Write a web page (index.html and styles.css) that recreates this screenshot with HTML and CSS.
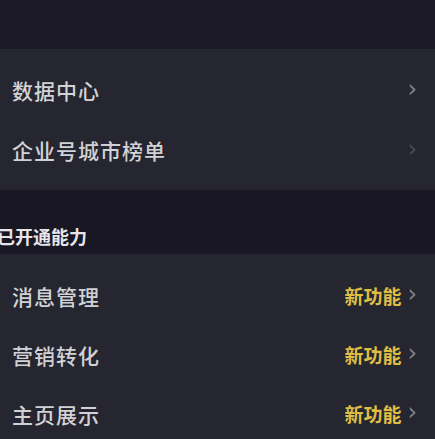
FILE: index.html
```html
<!DOCTYPE html>
<html lang="zh-CN">
<head>
    <meta charset="UTF-8">
    <meta name="viewport" content="width=device-width, initial-scale=1.0">
    <title>企业服务</title>
    <link rel="stylesheet" href="styles.css">
</head>
<body>

<div class="top-bar"></div>

<div class="card card-tools">
    <div class="row">
        <span class="label">数据中心</span>
        <span class="arrow">&#8250;</span>
    </div>
    <div class="row">
        <span class="label">企业号城市榜单</span>
        <span class="arrow dim">&#8250;</span>
    </div>
</div>

<div class="section-title">已开通能力</div>

<div class="card card-abilities">
    <div class="row">
        <span class="label">消息管理</span>
        <span class="right"><span class="tag">新功能</span><span class="arrow">&#8250;</span></span>
    </div>
    <div class="row">
        <span class="label">营销转化</span>
        <span class="right"><span class="tag">新功能</span><span class="arrow">&#8250;</span></span>
    </div>
    <div class="row">
        <span class="label">主页展示</span>
        <span class="right"><span class="tag">新功能</span><span class="arrow">&#8250;</span></span>
    </div>
</div>

</body>
</html>
```

FILE: styles.css
```css
body {
    margin: 0;
    padding: 0;
    background-color: #191824;
    font-family: "Noto Sans CJK SC", "Noto Sans", sans-serif;
    overflow: hidden;
}
.top-bar {
    height: 49px;
    background-color: #1a1925;
}
.card {
    background-color: #25262f;
}
.card-tools {
    padding: 11px 0 10px;
}
.card-abilities {
    padding: 12px 0 0;
}
.row {
    display: flex;
    justify-content: space-between;
    align-items: center;
    height: 60px;
    padding: 0 18px 0 12px;
}
.card-abilities .row {
    height: 59px;
}
.label {
    color: #d2d2d6;
    font-size: 21px;
    font-weight: 500;
    letter-spacing: 1px;
}
.right {
    display: flex;
    align-items: center;
    gap: 6px;
}
.tag {
    color: #dfbd44;
    font-size: 19px;
    font-weight: bold;
}
.arrow {
    color: #80818a;
    font-size: 24px;
    line-height: 1;
    margin-top: -3px;
    font-family: "DejaVu Sans", sans-serif;
}
.arrow.dim {
    color: #4a4b55;
}
.section-title {
    height: 64px;
    box-sizing: border-box;
    padding-top: 35px;
    margin-left: -3px;
    color: #e6e6ea;
    font-size: 18px;
    font-weight: bold;
    background-color: #181723;
    line-height: 22px;
}
```
